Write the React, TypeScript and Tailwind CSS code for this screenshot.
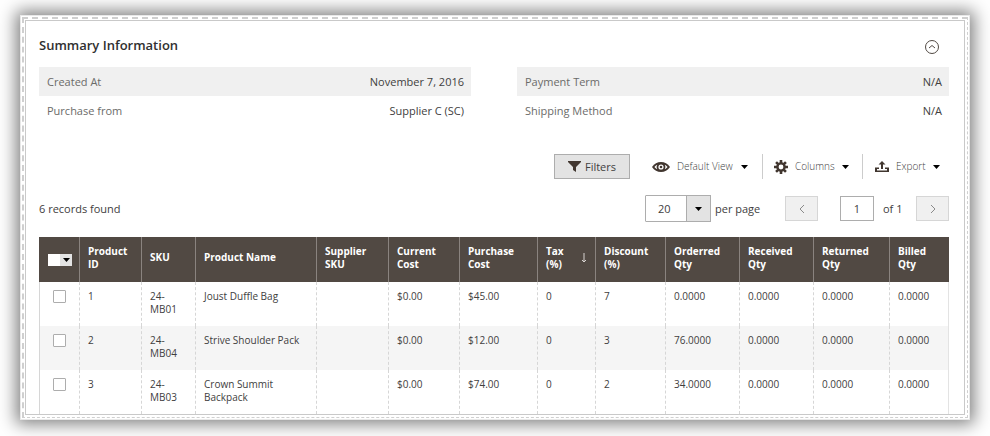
import { useState } from "react";

type Row = {
  id: number;
  sku: string;
  name: string;
  current: string;
  purchase: string;
  tax: string;
  discount: string;
  ordered: string;
};

const rows: Row[] = [
  { id: 1, sku: "24-MB01", name: "Joust Duffle Bag", current: "$0.00", purchase: "$45.00", tax: "0", discount: "7", ordered: "0.0000" },
  { id: 2, sku: "24-MB04", name: "Strive Shoulder Pack", current: "$0.00", purchase: "$12.00", tax: "0", discount: "3", ordered: "76.0000" },
  { id: 3, sku: "24-MB03", name: "Crown Summit Backpack", current: "$0.00", purchase: "$74.00", tax: "0", discount: "2", ordered: "34.0000" },
];

const summary = [
  [
    ["Created At", "November 7, 2016"],
    ["Purchase from", "Supplier C (SC)"],
  ],
  [
    ["Payment Term", "N/A"],
    ["Shipping Method", "N/A"],
  ],
];

const columns = [
  { label: "Product ID", width: "w-[62px]" },
  { label: "SKU", width: "w-[54px]" },
  { label: "Product Name", width: "w-[121px]" },
  { label: "Supplier SKU", width: "w-[72px]" },
  { label: "Current Cost", width: "w-[71px]" },
  { label: "Purchase Cost", width: "w-[78px]" },
  { label: "Tax (%)", width: "w-[58px]", sorted: true },
  { label: "Discount (%)", width: "w-[70px]" },
  { label: "Orderred Qty", width: "w-[74px]" },
  { label: "Received Qty", width: "w-[74px]" },
  { label: "Returned Qty", width: "w-[76px]" },
  { label: "Billed Qty", width: "w-[59px]" },
];

function Caret() {
  return (
    <svg viewBox="0 0 7 4" className="h-1 w-[7px] shrink-0 fill-black" aria-hidden="true">
      <path d="M0 0h7L3.500 4z" />
    </svg>
  );
}

function FunnelIcon() {
  return (
    <svg viewBox="0 0 13 11" className="h-[11px] w-[13px] shrink-0 fill-[#41362f]" aria-hidden="true">
      <path d="M0 0h13v1L8 6v5L5 9V6L0 1z" />
    </svg>
  );
}

function EyeIcon() {
  return (
    <svg viewBox="0 0 18 12" className="h-3 w-[18px] shrink-0" aria-hidden="true">
      <path fill="#41362f" d="M0 6C2.300 2.500 5.400 1 9 1s6.700 1.500 9 5c-2.300 3.500-5.400 5-9 5S2.300 9.500 0 6z" />
      <path fill="#fff" d="M2.400 6c.8-1.100 1.700-1.800 2.800-2.300a4.500 4.500 0 0 0 0 4.600C4.100 7.800 3.200 7.100 2.400 6zM15.600 6c-.8-1.100-1.700-1.800-2.800-2.300a4.500 4.500 0 0 1 0 4.600c1.100-.5 2-1.200 2.800-2.300z" />
      <circle cx="9" cy="6" r="2.600" fill="#fff" />
      <circle cx="9" cy="6" r="1.300" fill="#41362f" />
    </svg>
  );
}

function GearIcon() {
  return (
    <svg viewBox="0 0 14 14" className="size-3.5 shrink-0" aria-hidden="true">
      <g stroke="#41362f" strokeWidth="2.600">
        <path d="M7 0v3M7 11v3M0 7h3M11 7h3M2.050 2.050l2.100 2.100M9.850 9.850l2.100 2.100M2.050 11.950l2.100-2.100M9.850 4.150l2.100-2.100" />
        <circle cx="7" cy="7" r="3.600" fill="none" strokeWidth="2.400" />
      </g>
    </svg>
  );
}

function ExportIcon() {
  return (
    <svg viewBox="0 0 14 11" className="h-[11px] w-3.5 shrink-0 fill-[#41362f]" aria-hidden="true">
      <path d="M7 0l3.500 3.500H8V8H6V3.500H3.500z" />
      <path d="M0 6.500h4V8H2v1.500h10V8h-2V6.500h4V11H0z" />
    </svg>
  );
}

function Chevron({ d }: { d: string }) {
  return (
    <svg viewBox="0 0 6 10" className="h-2.5 w-1.5 fill-none stroke-[#8a8a8a]" aria-hidden="true">
      <path d={d} />
    </svg>
  );
}

export default function App() {
  const [open, setOpen] = useState(true);
  const cell = "border-r border-dashed border-[#d6d6d6] pt-2 pr-1 pl-2 last:border-solid last:border-[#e3e3e3]";

  return (
    <div className="overflow-hidden bg-white px-5 pt-[15px] pb-4 font-['Open_Sans','Noto_Sans',sans-serif] text-[10px] leading-[13px] text-[#41403e]">
      <main className="border border-[#e8e8e8] bg-white p-px shadow-[0_0_16px_4px_rgba(0,0,0,0.5)]">
        <div className="border border-t-2 border-l-2 border-dashed border-[#cfcfcf] pt-px pr-0.5 pb-0.5 pl-px">
          <div className="border border-[#c9c9c9] pr-[15px] pl-[13px]">
            <header className="flex items-center justify-between pt-3.5 pr-2.5 pb-3">
              <h1 className="text-[13px] leading-5 font-semibold text-[#303030]">Summary Information</h1>
              <button type="button" aria-label="Toggle summary" aria-expanded={open} onClick={() => setOpen(!open)}>
                <svg viewBox="0 0 14 14" className="mt-1 size-3.5 fill-none stroke-[#514943]" aria-hidden="true">
                  <circle cx="7" cy="7" r="6.500" />
                  <path d="M4 8l3-2.500L10 8" />
                </svg>
              </button>
            </header>

            <section className="grid grid-cols-2 gap-[46px] text-[11px] leading-[29px]">
              {summary.map((list, i) => (
                <dl key={i}>
                  {list.map(([term, value]) => (
                    <div key={term} className="flex justify-between pr-[7px] pl-2 odd:bg-[#f0f0f0]">
                      <dt className="text-[#6b6b69]">{term}</dt>
                      <dd>{value}</dd>
                    </div>
                  ))}
                </dl>
              ))}
            </section>

            <div className="mt-[29px] flex h-[25px] items-stretch justify-end whitespace-nowrap">
              <button type="button" className="mr-[22px] flex w-[76px] items-center justify-center gap-1 border border-[#adadad] bg-[#e3e3e3] text-[11px]">
                <FunnelIcon />
                Filters
              </button>
              <button type="button" className="flex w-[110px] items-center gap-[7px] pr-3.5 font-light">
                <EyeIcon />
                <span className="mr-auto">Default View</span>
                <Caret />
              </button>
              <button type="button" className="flex w-[100px] items-center gap-[7px] border-l border-[#ccc] pr-3.5 pl-[11px] font-light">
                <GearIcon />
                <span className="mr-auto">Columns</span>
                <Caret />
              </button>
              <button type="button" className="flex w-[87px] items-center gap-[7px] border-l border-[#ccc] pr-3 pl-3 font-light">
                <ExportIcon />
                <span className="mr-auto">Export</span>
                <Caret />
              </button>
            </div>

            <div className="mt-4 flex items-center justify-between text-[11px]">
              <p>6 records found</p>
              <div className="flex items-center">
                <div className="relative mr-1">
                  <select id="page-size" defaultValue="20" className="block h-[27px] w-[66px] appearance-none rounded-[1px] border border-[#adadad] bg-white pl-3">
                    <option>20</option>
                    <option>30</option>
                    <option>50</option>
                  </select>
                  <span className="pointer-events-none absolute inset-y-0 right-0 flex w-[25px] items-center justify-center border border-[#adadad] bg-[#e3e3e3]">
                    <Caret />
                  </span>
                </div>
                <label htmlFor="page-size" className="w-[70px]">per page</label>
                <button type="button" aria-label="Previous page" className="flex h-[25px] w-[33px] items-center justify-center border border-[#d6d6d6] bg-[#f0f0f0]">
                  <Chevron d="M5 1L1 5l4 4" />
                </button>
                <input id="page" aria-label="Page" defaultValue="1" className="ml-[22px] h-[25px] w-[34px] border border-[#adadad] bg-white text-center" />
                <label htmlFor="page" className="w-[42px] pl-[9px]">of 1</label>
                <button type="button" aria-label="Next page" className="flex h-[25px] w-[33px] items-center justify-center border border-[#d6d6d6] bg-[#f0f0f0]">
                  <Chevron d="M1 1l4 4-4 4" />
                </button>
              </div>
            </div>

            <table className="mt-[15px] w-full table-fixed border-separate border-spacing-0">
              <thead>
                <tr className="h-[45px] bg-[#514943] text-left text-white">
                  <th className="w-[41px] border-r border-l border-[#8a837f] border-l-[#514943] pl-2">
                    <div className="flex h-3 w-6">
                      <input type="checkbox" aria-label="Select all" className="h-3 w-3 appearance-none bg-white" />
                      <button type="button" aria-label="Selection options" className="flex w-3 items-center justify-center bg-[#e3e3e3]">
                        <Caret />
                      </button>
                    </div>
                  </th>
                  {columns.map((c) => (
                    <th key={c.label} className={`${c.width} border-r border-[#8a837f] pr-1 pb-1 pl-2 font-bold last:border-[#514943]`}>
                      {c.sorted ? (
                        <div className="flex items-center justify-between">
                          <span className="w-5">{c.label}</span>
                          <svg viewBox="0 0 6 10" className="mr-1 h-2.5 w-1.5 fill-none stroke-[#d8d4d1]" aria-label="Sorted descending">
                            <path d="M3 0v9M1 7l2 2 2-2" />
                          </svg>
                        </div>
                      ) : (
                        <div className={c.label === "Product Name" ? "" : "w-min"}>{c.label}</div>
                      )}
                    </th>
                  ))}
                </tr>
              </thead>
              <tbody>
                {rows.map((r) => (
                  <tr key={r.id} className="h-11 align-top even:bg-[#f5f5f5]">
                    <td className="border-r border-l border-dashed border-[#d6d6d6] pt-2 pl-[13px] [border-left-style:solid]">
                      <input type="checkbox" aria-label={`Select ${r.name}`} className="block size-[13px] appearance-none rounded-[1px] border border-[#adadad] bg-white" />
                    </td>
                    <td className={cell}>{r.id}</td>
                    <td className={cell}>
                      <div className="w-min">{r.sku}</div>
                    </td>
                    <td className={cell}>
                      <div className="max-w-[100px]">{r.name}</div>
                    </td>
                    <td className={cell} />
                    <td className={cell}>{r.current}</td>
                    <td className={cell}>{r.purchase}</td>
                    <td className={cell}>{r.tax}</td>
                    <td className={cell}>{r.discount}</td>
                    <td className={cell}>{r.ordered}</td>
                    <td className={cell}>0.0000</td>
                    <td className={cell}>0.0000</td>
                    <td className={cell}>0.0000</td>
                  </tr>
                ))}
              </tbody>
            </table>
          </div>
        </div>
      </main>
    </div>
  );
}
